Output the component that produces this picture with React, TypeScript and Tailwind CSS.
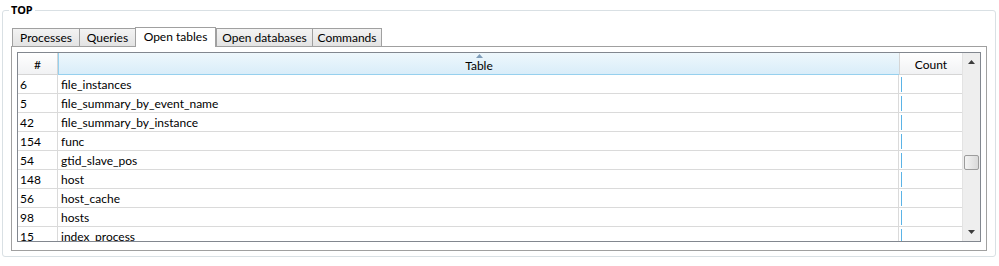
import React from "react";

const rows: [string, string][] = [
  ["6", "file_instances"],
  ["5", "file_summary_by_event_name"],
  ["42", "file_summary_by_instance"],
  ["154", "func"],
  ["54", "gtid_slave_pos"],
  ["148", "host"],
  ["56", "host_cache"],
  ["98", "hosts"],
  ["15", "index_process"],
];

const tabs = [
  { label: "Processes", w: "w-[67px]" },
  { label: "Queries", w: "w-[56px]" },
  { label: "Open tables", w: "w-[81px]", active: true },
  { label: "Open databases", w: "w-[96px]" },
  { label: "Commands", w: "w-[70px]" },
];

const App: React.FC = () => {
  return (
    <div className="w-[999px] h-[266px] bg-white pt-[10px] pl-[2px] text-[12px] text-black font-['Lato',sans-serif] overflow-hidden">
      {/* Group box */}
      <div className="relative w-[994px] h-[247px] border border-[#d9e0e4] rounded-[3px] pt-[15px] pl-[8px]">
        <span className="absolute -top-[8px] left-[6px] bg-white px-[2px] text-[11px] font-bold leading-[14px] font-['Noto_Sans',sans-serif]">
          TOP
        </span>

        {/* Tabs */}
        <div className="flex items-end h-[20px] pl-[1px] relative z-10">
          {tabs.map((t) =>
            t.active ? (
              <div
                key={t.label}
                className={`${t.w} h-[20px] -mb-px border border-b-0 border-[#a0a0a0] bg-white flex items-center justify-center leading-none pb-[1px]`}
              >
                {t.label}
              </div>
            ) : (
              <div
                key={t.label}
                className={`${t.w} h-[18px] border border-r-0 last:border-r border-b-0 border-[#a0a0a0] bg-gradient-to-b from-[#f3f3f3] to-[#e3e3e3] flex items-center justify-center leading-none`}
              >
                {t.label}
              </div>
            )
          )}
        </div>

        {/* Tab pane */}
        <div className="w-[976px] h-[205px] border border-[#a0a0a0] bg-white pt-[5px] pl-[5px]">
          {/* Table frame */}
          <div className="w-[964px] h-[190px] border border-[#82878f] flex overflow-hidden">
            <div className="flex-1 flex flex-col">
              {/* Header */}
              <div className="flex h-[22px] shrink-0">
                <div className="w-[40px] bg-gradient-to-b from-white to-[#f1f2f4] border-r border-b border-[#d5d5d5] flex items-center justify-center pt-[2px]">
                  #
                </div>
                <div className="relative w-[841px] bg-gradient-to-b from-[#eef7fc] to-[#d9edf9] border-l border-b border-[#96d0ee] flex items-center justify-center pt-[4px]">
                  <svg className="absolute top-[1px] left-[417px]" width="7" height="4" viewBox="0 0 7 4">
                    <path d="M0 4 L3.5 0 L7 4 Z" fill="#7f9db9" />
                  </svg>
                  Table
                </div>
                <div className="flex-1 bg-gradient-to-b from-white to-[#f1f2f4] border-l border-b border-[#d5d5d5] flex items-center justify-center pt-[2px]">
                  Count
                </div>
              </div>
              {/* Rows */}
              {rows.map(([n, name]) => (
                <div key={name} className="flex h-[19px] shrink-0 border-b border-[#dadada]">
                  <div className="w-[40px] pl-[2px] pt-[1px] flex items-center border-r border-[#dadada]">{n}</div>
                  <div className="w-[841px] pl-[3px] pt-[1px] flex items-center border-r border-[#dadada]">{name}</div>
                  <div className="flex-1 flex items-center pl-[2px]">
                    <div className="w-px h-[15px] bg-[#5bb3e6]" />
                  </div>
                </div>
              ))}
            </div>

            {/* Scrollbar */}
            <div className="w-[18px] bg-[#eeeeee] border-l border-[#e3e3e3] flex flex-col items-center">
              <div className="h-[18px] w-full flex items-center justify-center">
                <svg width="7" height="4" viewBox="0 0 7 4">
                  <path d="M0 4 L3.5 0 L7 4 Z" fill="#3c3c3c" />
                </svg>
              </div>
              <div className="h-[84px]" />
              <div className="w-[15px] h-[15px] rounded-[2px] border border-[#9c9c9c] bg-gradient-to-r from-[#f4f4f4] to-[#d9d9d9]" />
              <div className="flex-1" />
              <div className="h-[18px] w-full flex items-center justify-center">
                <svg width="7" height="4" viewBox="0 0 7 4">
                  <path d="M0 0 L3.5 4 L7 0 Z" fill="#3c3c3c" />
                </svg>
              </div>
            </div>
          </div>
        </div>
      </div>
    </div>
  );
};

export default App;
